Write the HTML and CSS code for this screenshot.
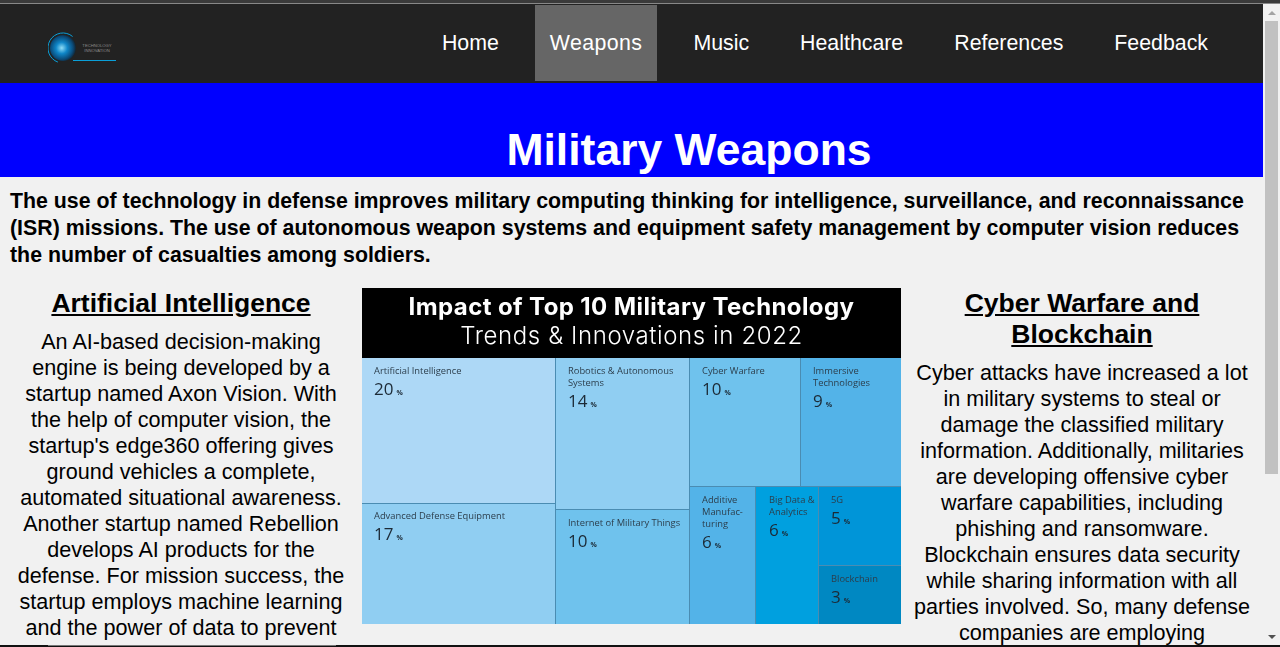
FILE: index.html
```html
<!DOCTYPE html>
<html lang="en">
<head>
    <meta charset="UTF-8">
    <title>Military Weapons</title>
    <link rel="stylesheet" href="styles.css">
</head>
<body>
<div class="topline"></div>
<div class="window">
    <div class="page">
        <div class="navbar">
            <svg class="logo" width="70" height="32" viewBox="0 0 70 32">
                <defs>
                    <radialGradient id="globe" cx="45%" cy="50%" r="55%">
                        <stop offset="0" stop-color="#8fdcf5"/>
                        <stop offset="0.4" stop-color="#0f86c8"/>
                        <stop offset="0.8" stop-color="#0a4a78"/>
                        <stop offset="1" stop-color="#14232e"/>
                    </radialGradient>
                </defs>
                <circle cx="15" cy="16" r="13" fill="url(#globe)"/>
                <path d="M24.6 4.5 A15 15 0 1 0 9.9 30.1" fill="none" stroke="#0a9fd8" stroke-width="1"/>
                <path d="M25 28.5 H68" stroke="#0a9fd8" stroke-width="1"/>
                <text x="49" y="15" class="logo-text">TECHNOLOGY</text>
                <text x="49" y="20" class="logo-text">INNOVATION</text>
            </svg>
            <ul class="menu">
                <li><a href="#">Home</a></li>
                <li><a href="#" class="active">Weapons</a></li>
                <li><a href="#">Music</a></li>
                <li><a href="#">Healthcare</a></li>
                <li><a href="#">References</a></li>
                <li><a href="#">Feedback</a></li>
            </ul>
        </div>
        <div class="hero">
            <h1>Military Weapons</h1>
        </div>
        <p class="intro">The use of technology in defense improves military computing thinking for intelligence, surveillance, and reconnaissance (ISR) missions. The use of autonomous weapon systems and equipment safety management by computer vision reduces the number of casualties among soldiers.</p>
        <div class="columns">
            <div class="col">
                <h2>Artificial Intelligence</h2>
                <p>An AI-based decision-making engine is being developed by a startup named Axon Vision. With the help of computer vision, the startup's edge360 offering gives ground vehicles a complete, automated situational awareness. Another startup named Rebellion develops AI products for the defense. For mission success, the startup employs machine learning and the power of data to prevent</p>
            </div>
            <div class="chart">
                <div class="chart-head">
                    <div class="chart-title">Impact of Top 10 Military Technology</div>
                    <div class="chart-sub">Trends &amp; Innovations in 2022</div>
                </div>
                <div class="map">
                    <div class="map-col col-a">
                        <div class="cell c-ai"><span>Artificial Intelligence</span><b>20<i>%</i></b></div>
                        <div class="cell c-def"><span>Advanced Defense Equipment</span><b>17<i>%</i></b></div>
                    </div>
                    <div class="map-col col-b">
                        <div class="cell c-rob"><span>Robotics &amp; Autonomous Systems</span><b>14<i>%</i></b></div>
                        <div class="cell c-iot"><span>Internet of Military Things</span><b>10<i>%</i></b></div>
                    </div>
                    <div class="map-col col-c">
                        <div class="map-row row-top">
                            <div class="cell c-cyb"><span>Cyber Warfare</span><b>10<i>%</i></b></div>
                            <div class="cell c-imm"><span>Immersive Technologies</span><b>9<i>%</i></b></div>
                        </div>
                        <div class="map-row row-bot">
                            <div class="cell c-add"><span>Additive Manufac-<br>turing</span><b>6<i>%</i></b></div>
                            <div class="cell c-big"><span>Big Data &amp; Analytics</span><b>6<i>%</i></b></div>
                            <div class="map-col col-d">
                                <div class="cell c-5g"><span>5G</span><b>5<i>%</i></b></div>
                                <div class="cell c-blk"><span>Blockchain</span><b>3<i>%</i></b></div>
                            </div>
                        </div>
                    </div>
                </div>
            </div>
            <div class="col">
                <h2>Cyber Warfare and Blockchain</h2>
                <p>Cyber attacks have increased a lot in military systems to steal or damage the classified military information. Additionally, militaries are developing offensive cyber warfare capabilities, including phishing and ransomware. Blockchain ensures data security while sharing information with all parties involved. So, many defense companies are employing</p>
            </div>
        </div>
    </div>
    <div class="scrollbar">
        <div class="arrow-up"></div>
        <div class="thumb-area"><div class="thumb"></div></div>
        <div class="arrow-down"></div>
    </div>
</div>
<div class="bottomline"><div class="bottom-tab"></div></div>
</body>
</html>
```
FILE: styles.css
```css
html, body {
    margin: 0;
    height: 100%;
    overflow: hidden;
}

body {
    display: flex;
    flex-direction: column;
    font-family: "Liberation Sans", Arial, sans-serif;
    background: #f1f1f1;
    color: #000;
}

.topline {
    height: 3px;
    background: #3a3a3a;
    border-bottom: 1px solid #888;
    flex: none;
}

.window {
    flex: 1;
    display: flex;
    min-height: 0;
}

.page {
    flex: 1;
    min-width: 0;
    overflow: hidden;
}

.navbar {
    height: 79px;
    background: #222;
    display: flex;
    justify-content: space-between;
    padding: 0 40px 0 48px;
    box-sizing: border-box;
}

.logo {
    margin-top: 28px;
}

.logo-text {
    font-size: 4.2px;
    fill: #8c8c8c;
    text-anchor: middle;
}

.menu {
    list-style: none;
    margin: 1px 0 0;
    padding: 0;
    display: flex;
    gap: 21px;
}

.menu a {
    display: block;
    height: 76px;
    line-height: 76px;
    padding: 0 15px;
    color: #fff;
    font-size: 21.33px;
    text-decoration: none;
}

.menu a.active {
    background: #666;
    letter-spacing: 0.4px;
}

.hero {
    height: 94px;
    box-sizing: border-box;
    background: #00f;
    padding: 0 0 1px 115px;
    display: flex;
    justify-content: center;
    align-items: flex-end;
    overflow: hidden;
}

h1 {
    margin: 0;
    color: #fff;
    font-size: 44.5px;
    line-height: 53px;
}

.intro {
    margin: 11px 0 0;
    padding: 0 10px;
    font-size: 21.33px;
    font-weight: bold;
    line-height: 27px;
}

.columns {
    display: grid;
    grid-template-columns: 342px 539px 342px;
    gap: 10px;
    padding: 0 10px;
    margin-top: 19px;
}

.col {
    text-align: center;
}

.col h2 {
    margin: 0 0 10px;
    font-size: 26.5px;
    line-height: 31px;
    text-decoration: underline;
}

.col p {
    margin: 0;
    font-size: 21.6px;
    line-height: 26px;
}

.chart {
    height: 336px;
    display: flex;
    flex-direction: column;
}

.chart-head {
    height: 70px;
    flex: none;
    background: #000;
    color: #fff;
    text-align: center;
    font-family: Inter, "Open Sans", sans-serif;
    filter: blur(0.4px);
}

.chart-title {
    font-size: 24px;
    font-weight: 700;
    line-height: 30px;
    padding-top: 4px;
    letter-spacing: 0.4px;
}

.chart-sub {
    font-size: 24px;
    line-height: 27px;
    font-weight: 300;
    letter-spacing: 0.6px;
}

.map {
    flex: 1;
    display: flex;
    min-height: 0;
}

.map-col {
    display: flex;
    flex-direction: column;
}

.map-row {
    display: flex;
}

.col-a { width: 194px; }
.col-b { width: 134px; }
.col-c { width: 211px; }
.col-d { width: 82px; }

.row-top { height: 129px; }
.row-bot { height: 137px; }

.cell {
    box-sizing: border-box;
    border-right: 1px solid #4a8cb2;
    border-bottom: 1px solid #4a8cb2;
    padding: 7px 0 0 12px;
    font-family: "Open Sans", sans-serif;
    color: #2c3e4c;
    overflow: hidden;
}

.cell span {
    display: block;
    font-size: 9.35px;
    line-height: 12px;
    filter: blur(0.3px);
}

.cell b {
    display: block;
    font-size: 17px;
    font-weight: 400;
    line-height: 24px;
    color: #1c2a36;
    filter: blur(0.3px);
}

.cell i {
    font-size: 7px;
    font-weight: 700;
    font-style: normal;
    margin-left: 3px;
}

.c-ai  { height: 146px; background: #add8f6; }
.c-def { height: 120px; background: #90cef2; border-bottom: 0; padding-top: 6px; }
.c-rob { height: 152px; background: #90cef2; }
.c-iot { height: 114px; background: #6fc2ed; border-bottom: 0; }
.c-cyb { width: 111px; background: #6fc2ed; }
.c-imm { width: 100px; background: #53b3e8; border-right: 0; }
.c-add { width: 66px; background: #53b3e8; border-bottom: 0; }
.c-big { width: 63px; background: #00a0df; border-bottom: 0; padding-left: 13px; }
.c-5g  { height: 79px; background: #0095d8; border-right: 0; }
.c-blk { height: 58px; background: #0088c2; border-right: 0; border-bottom: 0; }

.scrollbar {
    width: 17px;
    flex: none;
    background: #f1f1f1;
    display: flex;
    flex-direction: column;
}

.arrow-up, .arrow-down {
    height: 17px;
    flex: none;
    display: flex;
    justify-content: center;
    align-items: center;
}

.arrow-up::before {
    content: "";
    border: 4px solid transparent;
    border-top: 0;
    border-bottom: 4px solid #a3a3a3;
}

.arrow-down::before {
    content: "";
    border: 4px solid transparent;
    border-bottom: 0;
    border-top: 4px solid #505050;
}

.thumb-area {
    flex: 1;
    padding: 0 2px;
}

.thumb {
    height: 453px;
    background: #c1c1c1;
}

.bottomline {
    height: 2px;
    flex: none;
    background: #111;
    padding-left: 48px;
}

.bottom-tab {
    width: 288px;
    height: 1px;
    background: #777;
}
```
